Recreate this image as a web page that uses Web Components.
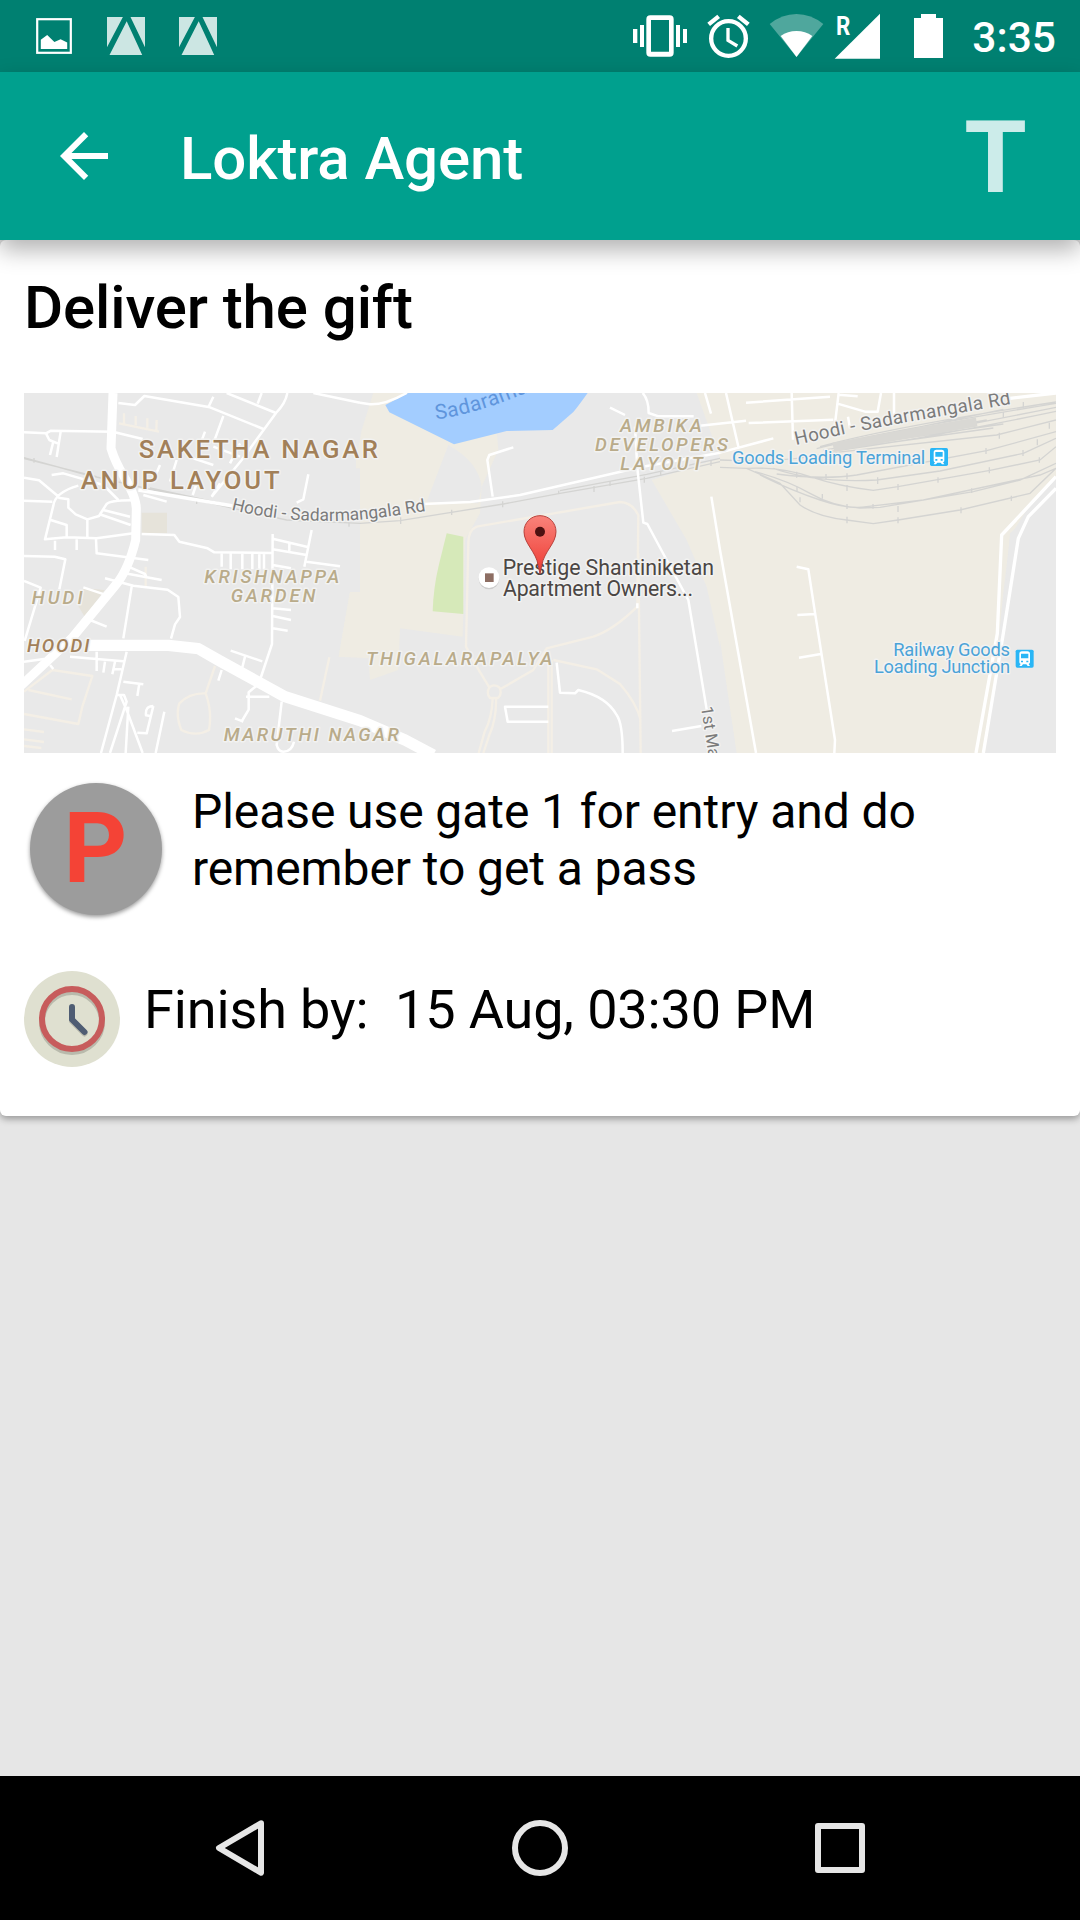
<!DOCTYPE html>
<html lang="en">
<head>
<meta charset="utf-8">
<title>Loktra Agent</title>
<style>
html,body{margin:0;padding:0}
body{width:1080px;height:1920px;overflow:hidden;background:#e6e6e6;font-family:Roboto,"Noto Sans",sans-serif}
</style>
</head>
<body>
<agent-screen></agent-screen>
<script>
const define = (name, html) => {
  const tpl = document.createElement('template');
  tpl.innerHTML = html;
  customElements.define(name, class extends HTMLElement {
    constructor() {
      super();
      this.attachShadow({mode: 'open'}).appendChild(tpl.content.cloneNode(true));
    }
  });
};

define('status-bar', `
<style>
:host{display:flex;justify-content:space-between;height:72px;background:#008071;color:#fff;box-sizing:border-box;padding:0 24px 0 18px}
div{display:flex}
svg{display:block;height:72px;fill:#fff}
time{font-size:42.5px;font-weight:500;line-height:72px;padding-top:1.5px}
</style>
<div>
  <svg width="72" viewBox="18 0 72 72"><rect x="37.2" y="19.2" width="33.6" height="33.6" fill="none" stroke="#fff" stroke-width="2.2"/><path d="M40.8 39.7l6.400-4.700 7.200 7 6.200-2.700 6.600 3.300V49H40.800z"/></svg>
  <svg width="72" viewBox="90 0 72 72"><path fill="#cce6e3" d="M107 17h15.900L107 47.300zM126.700 21.300L142.200 55h-32.700zM130.500 17H145v30.300z"/></svg>
  <svg width="72" viewBox="90 0 72 72"><path fill="#cce6e3" d="M107 17h15.900L107 47.300zM126.700 21.300L142.200 55h-32.700zM130.500 17H145v30.300z"/></svg>
</div>
<div>
  <svg width="72" viewBox="72 0 216 216"><path d="M99 87h13v42H99zM120 75h12v66h-12zM228 75h12v66h-12zM249 87h12v42h-12z"/><path fill-rule="evenodd" d="M151 46h58q12 0 12 12v100q0 12-12 12h-58q-12 0-12-12V58q0-12 12-12zM153 60v95h54V60z"/></svg>
  <svg width="64" viewBox="288 0 192 216"><g fill="none" stroke="#fff"><circle cx="385.500" cy="115.500" r="52" stroke-width="13"/><path stroke-width="13" d="M326 73l30-24M445 73l-30-24"/><path stroke-width="10" d="M384 84v37l28 17"/></g></svg>
  <svg width="70" viewBox="480 0 210 216"><path fill="#4fa79d" d="M509 72Q546 42 589.500 42T670 72L589.500 171z"/><path d="M542 108q21-15 47.500-15t47.500 15l-47.500 63z"/></svg>
  <svg width="60" viewBox="690 0 180 216"><path d="M840 41v135H704z"/><text x="708" y="106" font-size="76" font-weight="700" textLength="43" lengthAdjust="spacingAndGlyphs">R</text></svg>
  <svg width="70" viewBox="870 0 210 216"><path d="M942 54h21V42h45v12h21v120h-87z"/></svg>
  <time style="margin-left:12px">3:35</time>
</div>`);

define('app-bar', `
<style>
:host{display:flex;align-items:center;height:168px;box-sizing:border-box;padding:0 48px;background:#00a08e;color:#fff;position:relative;z-index:1;box-shadow:0 10px 22px rgba(0,0,0,.3)}
svg{width:72px;height:72px;fill:#fff}
h1{margin:0 0 0 60px;font-size:60px;font-weight:500;line-height:70px;flex:1;padding-top:6px;letter-spacing:-.1px}
b{font-size:101px;line-height:118px;color:#ccecea;font-weight:700;width:73px;text-align:center;padding-top:4px}
</style>
<svg viewBox="0 0 24 24"><path d="M20 11H7.830l5.590-5.590L12 4l-8 8 8 8 1.410-1.410L7.830 13H20v-2z"/></svg>
<h1><slot></slot></h1><b>T</b>`);

define('map-view', `
<style>
:host{display:block;height:360px}
svg{display:block;width:1032px;height:360px;background:#e9e9e9}
.b{fill:#efece3}.w{fill:none;stroke:#fff;stroke-width:7.500;stroke-linejoin:round}
.t{fill:none;stroke:#f4efe6;stroke-width:7;stroke-linejoin:round}
.r{fill:none;stroke:#d4d4d2;stroke-width:4}
text{paint-order:stroke;stroke:#f2f2f1;stroke-width:9;stroke-linejoin:round}
.big{font-size:77px;font-weight:500;fill:#a28059}
.loc{font-size:56px;font-weight:500;font-style:italic;fill:#b9ab8a}
.rd{font-size:52px;fill:#7b7b7b}
.poi{font-size:64px;fill:#4b4644}
.st{font-size:55px;fill:#4ba3d8}
</style>
<svg viewBox="72 39 3096 1080">
<defs>
<path id="rdA" d="M694 389Q800 416 910 421T1110 416T1330 384"/>
<path id="rdC" d="M2388 195Q2560 155 2700 130T3100 60"/>
<path id="lake" d="M1308 118Q1430 103 1600 30L1800 -60"/>
<g id="train"><rect width="54" height="54" rx="5" fill="#29b6f6"/><path fill="#fff" fill-rule="evenodd" d="M19 5h16q8 0 8 8v25q0 4-4 5l4 6h-7l-4-5H22l-4 5h-7l4-6q-4-1-4-5V13q0-8 8-8zM16 12v14h22V12zM16 33v5h6v-5zM32 33v5h6v-5z"/></g>
</defs>
<!-- built-up areas -->
<g class="b">
<path d="M1120 39h380L1340 195 1285 350 1150 370 1080 790V830H1016L1050 636 1080 636V265L1068 265V240L1085 150z"/>
<path d="M1120 39H1240L1160 95 1362 190 1490 150 1495 210 1445 320 1440 400 1395 480 1388 770 1200 745 1195 870 1110 900 1105 835 1016 830 1050 636H1105V265H1068V235z"/>
<path d="M2090 39H3168V290L3080 390 3030 470 3010 640 2960 1119H2210L2160 800 2120 620 2060 480 1955 300 2160 235z"/>
<path fill="#e6e3da" d="M425 398h76v62h-76zM230 670l22-45 62 5-60 80z"/>
</g>
<path fill="#e9e9e9" d="M3168 330L3090 405 3030 460 2998 860 2955 1119H3168zM2160 780l45 310-45 10zM1345 195q90 50 100 125L1435 370 1280 365z"/>
<path fill="#a3cdff" d="M1225 39H1763Q1730 85 1720 96L1658 150 1520 153 1362 193 1168 97 1156 75z"/>
<path fill="#d6e9b9" d="M1340 460l50 10v232l-92-8q2-70 18-137z"/>
<!-- unpaved lanes -->
<path class="t" d="M357 130l120 25M372 100v32M407 108v28M442 115v28M470 120l-1 32M72 935l85-65 120 18-30 92-12 52-163-30M85 930l130 28M72 1048l60 8M72 1078l60 8M72 1098l52 6M645 858l-28 82q20 55 10 110-40 22-83 0-18-45-6-80 30-32 79-30M988 832l-28 130M437 560v60"/>
<g transform="translate(1080 0)" class="t">
<path d="M350 440q-25 10-25 50L318 800 350 860 388 922M350 440L780 366q38 2 55 40L832 680Q760 750 700 770L560 805 520 870 420 928M835 520L842 1119M388 922q-10 18 2 32h24q14-14 4-32-16-12-30 0zM398 955q-2 60-24 100l-18 64M408 955q2 60-20 110l-18 54M565 840V1119M575 840V1119M580 840L710 868 780 912Q830 970 842 1020"/>
</g>
<!-- railway -->
<g class="r"><path d="M72 233L250 282 460 330 700 385 860 420 1080 430 1200 422 1510 372 1680 340 1940 295 2160 245M1680 332L1940 283 2160 235M72 236L290 290M450 324L700 378"/>
<path d="M102 234v14M590 357v15M1047 428v12M1202 412v20M1355 389v16M1508 364v18M1676 332v10M1782 318v18M1830 303v15M1933 290v18M1982 272v16M2133 240v18"/>
<path d="M2160 262L2240 265 2340 310 2400 375Q2450 410 2540 420L2620 431 2694 420 2880 390 3090 340 3168 265M2265 275Q2360 300 2430 340T2580 384L2640 382 2920 335 3060 300 3168 250M2280 285Q2370 330 2460 360T2600 380L2770 360 3120 285 3168 265M2240 265Q2340 260 2430 290T2620 331L2694 320 2970 271 3120 240 3168 200M2320 265Q2450 310 2630 300L2820 273 3070 220 3168 175M2330 282Q2470 300 2570 285L2960 212 3168 155M2160 240Q2350 250 2480 220L2990 165 3168 120"/>
<path d="M2541 280v18M2541 315v18M2541 372v15M2541 410v20M2619 372v14M2633 292v20M2694 312v18M2694 378v18M2694 412v18M2814 292v16M2883 382v18M2968 262v18M3034 347v16M2915 325v14M3069 210v18M3118 232v16M3112 178v18M2958 204v18M2998 158v18M3148 128v18M3070 66v18M3010 96v18M2400 352v15M2391 320v14M2390 275v18M2467 342v14M2478 282v16"/>
<path d="M2450 206Q2620 160 3168 70M2470 210Q2680 180 3168 82M2490 214Q2730 185 3168 94M2460 200Q2670 142 3168 66M2510 206Q2700 166 2960 120M2510 196Q2700 152 3010 88M2560 196L3010 132M2510 210L2980 144"/>
<path stroke="#d9d8d4" stroke-width="28" d="M2500 202Q2640 176 2930 126"/></g>
<!-- streets, west -->
<g class="w">
<path d="M72 157l66 3 15-8 185 3 90 22M138 160l10 20 25 10M182 155l-12 76M160 185l-10 40M355 69l50 6 28-27L630 82 790 147M640 50L625 82M680 39L828 99M785 39l-12 32M862 39q-5 30-34 60L725 240 635 350M670 108L640 190M615 155l-15 40M580 235l60 20M690 250l30-60M640 200l80 30M940 39L1080 68"/>
<path d="M155 285l35-5 120 35 45 45M72 293l45 8 60 50M235 317q-70 20-75 60L135 478 200 472 290 475 400 460M72 362l85 3M175 353l30 5v25l22 20 35 15 35-10 22-35q10-12 75-12M310 390l80 20M297 402l95 33M262 418v55M152 420l48 15v37M165 482v28M230 478v32M288 478l2 42 155 20M72 528l92 2 32 8-18 90M250 622l65 22M72 603l50 20-48 160M385 560l50 22 5 10M375 580l110 20M315 595l85 22 103 12 32 22 5 60-15 22-12 43M395 620l-25 155M270 720l50 20M72 845l60-8M210 830l160 14M380 815L350 945 303 1119M290 815v58M315 845l-5 33M345 845l-8 38M340 868h24M370 905l60 8M418 910l-6 38M350 945h22l8 20-50 154M380 990l48 129M385 980l-8 139M360 945l20 45M460 978l-20 82-28-2M460 978q-25 0-22 28l12 2M493 995l-26 124M150 855l10 12"/>
<path d="M425 462l98 3 15 20 85 20 20 12 172 2M665 515v45M692 518v50M727 518v50M757 518v50M778 518v50M792 518v50M818 462l-2 330-40 120-30 25 0 52-22 37M818 476l105 25M868 490v22M818 508l102 17M935 450l-22 110M920 545l100 14M818 555l55 10M818 685l55 5M818 708l55 12M818 745l45 7M692 812l95 32M735 830l-10 40M665 870l-10 32M738 950h70M705 1015l25 10M845 965l-15 130q5 20 20 20 25 0 32-30M925 283l-15 75-20 10M480 255l-22 50M530 240l-20 65M590 310l-12 35M660 310l-25 40M430 345l70 20"/>
<path d="M415 330L700 378" stroke-width="10"/>
<path stroke-width="27" d="M339 39L333 205Q345 245 372 290 408 350 409 385L407 480Q385 570 347 615L215 775 60 920"/>
<path stroke-width="34" d="M265 796L505 796 595 806 660 843 855 950 1080 1022 1215 1080 1300 1125"/>
</g>
<!-- streets, centre and east -->
<g class="w" transform="translate(1080 0)">
<path d="M0 68L30 73Q75 75 140 39M190 372L330 366 480 345 840 262 1080 218 1240 175M398 350L382 240 388 225 460 202M825 140L832 265 850 428 862 432 920 540 985 660 1042 1000M750 83l45 22M848 39q18 20 18 60l30 10h105M1035 39l18 62M1098 39l38 165M1020 137l138-15M1054 350L1080 510 1188 1119M832 670v15M590 848l10 90 45 2 10-10Q740 950 770 1005 788 1030 788 1119M565 980H435l8 45h122M936 1053l88-15"/>
<path d="M1158 68l252-18M1166 129l254-10M1295 39l4 140M1436 39l-12 100M1430 70l85 25h38l10-56M1602 39v80M1435 44l58 5M1464 110l6 35M1310 560l35 8 20 130 60 382-2 39M1312 705l55-3M1317 833l70-12"/>
<path stroke-width="10" d="M2088 290L1925 465 1912 760 1848 1119M2088 325L2005 410 1975 475 1930 760 1870 1119M1950 55L2088 39"/>
</g>
<text class="big" x="416" y="235" textLength="718">SAKETHA NAGAR</text>
<text class="big" x="242" y="326" textLength="597">ANUP LAYOUT</text>
<text class="rd"><textPath href="#rdA">Hoodi - Sadarmangala Rd</textPath></text>
<text class="loc" x="613" y="610" textLength="405">KRISHNAPPA</text>
<text class="loc" x="692" y="667" textLength="254">GARDEN</text>
<text class="loc" x="95" y="673" textLength="153">HUDI</text>
<text class="loc" x="81" y="817" textLength="187" style="fill:#a28059">HOODI</text>
<text class="loc" x="671" y="1084" textLength="526">MARUTHI NAGAR</text>
<text style="font-size:62px;fill:#5f95dc;stroke:#a3cdff;letter-spacing:1.500px"><textPath href="#lake">Sadaraman</textPath></text>
<text class="loc" x="1860" y="155" textLength="245">AMBIKA</text>
<text class="loc" x="1785" y="213" textLength="399">DEVELOPERS</text>
<text class="loc" x="1861" y="271" textLength="247">LAYOUT</text>
<text class="loc" x="1099" y="856" textLength="558">THIGALARAPALYA</text>
<text class="rd" style="font-size:50px" transform="translate(2103 982) rotate(81)">1st Main</text>
<text class="rd" style="font-size:56px;letter-spacing:1.100px"><textPath href="#rdC">Hoodi - Sadarmangala Rd</textPath></text>
<text class="st" x="2196" y="252" textLength="580">Goods Loading Terminal</text>
<text class="st" x="2680" y="828" textLength="350">Railway Goods</text>
<text class="st" x="2622" y="880" textLength="408">Loading Junction</text>
<use href="#train" x="2790" y="204"/><use href="#train" x="3047" y="809"/>
<circle cx="1467" cy="597" r="31" fill="#ccc"/><circle cx="1467" cy="593" r="31" fill="#fff"/><path fill="#8d6e63" d="M1455 580h26v26h-26z"/>
<text class="poi" x="1508" y="585" textLength="634">Prestige Shantiniketan</text>
<text class="poi" x="1509" y="647" textLength="570">Apartment Owners...</text>
<linearGradient id="pin" x2="0" y2="1"><stop stop-color="#f9837b"/><stop offset="1" stop-color="#ee3a32"/></linearGradient>
<path fill="url(#pin)" stroke="#b9413b" stroke-width="3" d="M1620 407c27 0 48 21 48 48 0 36-36 59-43 102l-5 24-5-24c-7-43-43-66-43-102 0-27 21-48 48-48z"/><circle cx="1620" cy="455" r="15" fill="#4d1111"/>
</svg>`);

define('task-card', `
<style>
:host{display:flex;flex-direction:column;height:876px;box-sizing:border-box;padding:33px 24px 0;background:#fff;border-radius:6px;box-shadow:0 3px 7px rgba(0,0,0,.34)}
h2{margin:0 0 50px;font-size:60px;font-weight:500;line-height:70px;letter-spacing:-.1px;color:#000}
</style>
<h2><slot name="title"></slot></h2><slot></slot>`);

define('instruction-row', `
<style>
:host{display:flex;align-items:flex-start;padding:30px 6px 0;gap:30px}
b{display:flex;justify-content:center;align-items:center;width:132px;height:132px;border-radius:50%;background:#9c9c9c;color:#f44336;font-size:99px;font-weight:700;line-height:116px;box-sizing:border-box;padding:0 1px 2px 0;box-shadow:0 2px 4px rgba(0,0,0,.4);flex:none}
p{margin:0;font-size:48px;line-height:57px;width:760px;letter-spacing:-.08px;color:#000}
</style>
<b>P</b><p><slot></slot></p>`);

define('deadline-row', `
<style>
:host{display:flex;align-items:flex-start;padding-top:56px;gap:24px}
svg{width:96px;height:96px;display:block}
p{margin:0;padding-top:7px;font-size:54px;line-height:64px;white-space:pre;letter-spacing:-.12px;color:#000}
</style>
<svg viewBox="0 0 96 96" fill="none" stroke-width="6" stroke-linecap="round" stroke-linejoin="round"><circle cx="48" cy="48" r="48" fill="#dfe0d0"/><g stroke="#b9baac"><circle cx="48" cy="51" r="30"/><path d="M48 38v12l12.500 12.500"/></g><circle cx="48" cy="48" r="30" stroke="#c75c5c"/><path stroke="#4f5d73" d="M48 36v12.500l12.500 12.500"/></svg>
<p><slot></slot></p>`);

define('nav-bar', `
<style>
:host{display:flex;justify-content:center;height:144px;background:#000}
svg{width:300px;height:144px;fill:none;stroke:#e6e6e6;stroke-width:6;stroke-linejoin:round}
</style>
<svg viewBox="90 1776 300 144"><path d="M261 1823.300L219 1848 261 1872.700z"/></svg>
<svg viewBox="390 1776 300 144"><circle cx="540" cy="1848" r="25"/></svg>
<svg viewBox="690 1776 300 144"><rect x="818" y="1826" width="44" height="44"/></svg>`);

define('agent-screen', `
<style>
:host{display:flex;flex-direction:column;width:1080px;height:1920px;background:#e6e6e6}
main{flex:1}
</style>
<status-bar></status-bar>
<app-bar>Loktra Agent</app-bar>
<main>
  <task-card>
    <span slot="title">Deliver the gift</span>
    <map-view></map-view>
    <instruction-row>Please use gate 1 for entry and do remember to get a pass</instruction-row>
    <deadline-row>Finish by:  15 Aug, 03:30 PM</deadline-row>
  </task-card>
</main>
<nav-bar></nav-bar>`);
</script>
</body>
</html>
